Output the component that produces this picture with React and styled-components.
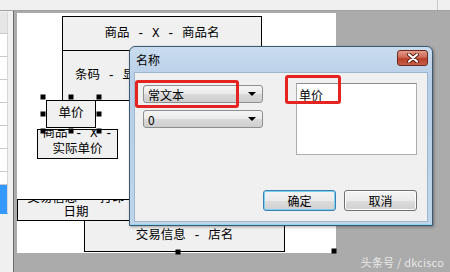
import React from "react"
import styled, { createGlobalStyle } from "styled-components"

const GlobalStyle = createGlobalStyle`
  html, body {
    margin: 0;
    padding: 0;
    background: #ababab;
  }
  body {
    font-family: "Noto Sans CJK SC", "Noto Sans", sans-serif;
  }
`

const Screen = styled.div`
  position: relative;
  width: 450px;
  height: 272px;
  display: flex;
  flex-direction: column;
  overflow: hidden;
  background: #f0f0f0;
`

const TopBar = styled.div`
  height: 10px;
  flex-shrink: 0;
  display: flex;
  justify-content: flex-end;
  background: #f0f0f0;
  border-bottom: 1px solid #a0a0a0;
`

const TopDivider = styled.div`
  width: 1px;
  height: 10px;
  margin-right: 12px;
  background: #c8c8c8;
`

const Main = styled.div`
  flex: 1;
  display: flex;
  min-height: 0;
`

const SideList = styled.div`
  width: 13px;
  flex-shrink: 0;
  display: flex;
  flex-direction: column;
  padding-top: 1px;
  background: #f0f0f0;
  border-right: 1px solid #6e6e6e;
`

const SideItem = styled.div`
  width: 7px;
  height: ${(p) => p.$h || 22}px;
  flex-shrink: 0;
  background: ${(p) => (p.$active ? "#3399ff" : p.$head ? "#e6e6e6" : "#ffffff")};
  border-bottom: 1px solid ${(p) => (p.$active ? "#3399ff" : "#c9c9c9")};
  border-right: 1px solid #d8d8d8;
`

const Workspace = styled.div`
  flex: 1;
  background: #ababab;
  padding: 2px 0 0 3px;
`

const Page = styled.div`
  position: relative;
  width: 319px;
  height: 240px;
  background: #ffffff;
`

const Field = styled.div`
  position: absolute;
  box-sizing: border-box;
  display: flex;
  flex-direction: column;
  align-items: center;
  justify-content: ${(p) => (p.$bottom ? "flex-end" : "center")};
  overflow: hidden;
  background: #f0f0f0;
  border: 1px solid #000;
  color: #000;
  font-family: "Liberation Mono", "Noto Sans CJK SC", monospace;
  font-size: 12.5px;
  line-height: ${(p) => p.$lh || 16}px;
  white-space: pre;
`

const Selection = styled.div`
  position: absolute;
`

const Handle = styled.div`
  position: absolute;
  width: 5px;
  height: 5px;
  background: #000;
  transform: translate(-50%, -50%);
`

const Dialog = styled.div`
  position: absolute;
  left: 129px;
  top: 46px;
  width: 304px;
  height: 180px;
  box-sizing: border-box;
  display: flex;
  flex-direction: column;
  padding: 0 4px 3px;
  border: 1px solid #3d5873;
  border-radius: 6px 6px 0 0;
  background: linear-gradient(#c9dcef, #b7cee6 20%, #bfd5ea);
  box-shadow: inset 0 -1px 0 #8fd6ee, 1px 1px 3px rgba(0, 0, 0, 0.35);
`

const TitleBar = styled.div`
  height: 25px;
  flex-shrink: 0;
  display: flex;
  align-items: center;
  justify-content: space-between;
  font-size: 12px;
  color: #000;
  padding-left: 2px;
`

const CloseButton = styled.div`
  width: 31px;
  height: 16px;
  box-sizing: border-box;
  margin-top: -4px;
  display: flex;
  align-items: center;
  justify-content: center;
  border: 1px solid #6b2a22;
  border-radius: 3px;
  background: linear-gradient(#e39a88, #cf6a55 45%, #b8402a 55%, #c8604a);
`

const DialogBody = styled.div`
  flex: 1;
  position: relative;
  display: flex;
  flex-direction: column;
  background: #f0f0f0;
  border: 1px solid #9fb6cf;
  padding: 10px 10px 10px 8px;
`

const Controls = styled.div`
  display: flex;
  gap: 33px;
`

const ComboColumn = styled.div`
  display: flex;
  flex-direction: column;
  gap: 7px;
  margin-top: 2px;
`

const Combo = styled.div`
  width: 120px;
  height: 18px;
  box-sizing: border-box;
  display: flex;
  align-items: center;
  justify-content: space-between;
  padding: 0 6px 0 4px;
  border: 1px solid #8e8f8f;
  border-radius: 3px;
  background: linear-gradient(#f5f5f5, #eaeaea 50%, #dadada 51%, #cfcfcf);
  font-size: 12px;
  color: #000;
`

const Arrow = styled.div`
  width: 0;
  height: 0;
  border-left: 4px solid transparent;
  border-right: 4px solid transparent;
  border-top: 4px solid #000;
`

const TextBox = styled.div`
  width: 122px;
  height: 72px;
  box-sizing: border-box;
  padding: 2px 2px;
  background: #fff;
  border: 1px solid #abadb3;
  border-top-color: #8a8c92;
  font-size: 12px;
  color: #000;
`

const ButtonRow = styled.div`
  margin-top: auto;
  display: flex;
  justify-content: flex-end;
  gap: 8px;
`

const Button = styled.div`
  width: 73px;
  height: 21px;
  box-sizing: border-box;
  display: flex;
  align-items: center;
  justify-content: center;
  border: 1px solid ${(p) => (p.$primary ? "#3c7fb1" : "#707070")};
  border-radius: 3px;
  background: linear-gradient(#f4f4f4, #ebebeb 50%, #dddddd 51%, #cfcfcf);
  box-shadow: ${(p) => (p.$primary ? "inset 0 0 0 1px #7ad0f0" : "inset 0 0 0 1px #fcfcfc")};
  font-size: 12px;
  color: #000;
`

const Mark = styled.div`
  position: absolute;
  box-sizing: border-box;
  border: 3px solid #e52421;
  border-radius: 3px;
`

const Watermark = styled.div`
  position: absolute;
  right: 6px;
  bottom: 2px;
  font-size: 11px;
  color: rgba(255, 255, 255, 0.75);
  letter-spacing: 0.2px;
`

const handles = [
  [-3, -3],
  [25, -3],
  [53, -3],
  [-3, 14],
  [53, 14],
  [-3, 31],
  [25, 31],
  [53, 31],
]

const App = () => (
  <Screen>
    <GlobalStyle />
    <TopBar>
      <TopDivider />
    </TopBar>
    <Main>
      <SideList>
        <SideItem $head $h={21} />
        <SideItem />
        <SideItem />
        <SideItem />
        <SideItem />
        <SideItem />
        <SideItem />
        <SideItem $h={12} />
        <SideItem $active $h={28} />
      </SideList>
      <Workspace>
        <Page>
          <Field style={{ left: 45, top: 3, width: 200, height: 35 }}>
            {"商品 - X - 商品名"}
          </Field>
          <Field style={{ left: 45, top: 37, width: 200, height: 51, alignItems: "flex-start", paddingLeft: 12 }}>
            {"条码 - 显示条码"}
          </Field>
          <Field $bottom style={{ left: 20, top: 116, width: 81, height: 30 }}>
            <span>{"商品 - X -"}</span>
            <span>实际单价</span>
          </Field>
          <Selection style={{ left: 29, top: 87, width: 50, height: 28 }}>
            <Field style={{ left: 0, top: 0, width: "100%", height: "100%" }}>单价</Field>
            {handles.map(([x, y]) => (
              <Handle key={`${x}-${y}`} style={{ left: x, top: y }} />
            ))}
          </Selection>
          <Field $bottom $lh={14} style={{ left: 0, top: 186, width: 118, height: 22 }}>
            <span>{"交易信息 - 打印"}</span>
            <span>日期</span>
          </Field>
          <Field style={{ left: 67, top: 207, width: 201, height: 32 }}>
            {"交易信息 - 店名"}
          </Field>
          <Handle style={{ left: 161, top: 239 }} />
          <Handle style={{ left: 317, top: 238 }} />
        </Page>
      </Workspace>
    </Main>

    <Dialog>
      <TitleBar>
        <span>名称</span>
        <CloseButton>
          <svg width="14" height="10" viewBox="0 0 14 10">
            <path d="M3 1.5 L11 8.5 M11 1.5 L3 8.5" stroke="#5a1c12" strokeWidth="4" strokeLinecap="round" />
            <path d="M3 1.5 L11 8.5 M11 1.5 L3 8.5" stroke="#ffffff" strokeWidth="2.2" strokeLinecap="round" />
          </svg>
        </CloseButton>
      </TitleBar>
      <DialogBody>
        <Controls>
          <ComboColumn>
            <Combo>
              <span>常文本</span>
              <Arrow />
            </Combo>
            <Combo>
              <span>0</span>
              <Arrow />
            </Combo>
          </ComboColumn>
          <TextBox>单价</TextBox>
        </Controls>
        <ButtonRow>
          <Button $primary>确定</Button>
          <Button>取消</Button>
        </ButtonRow>
        <Mark style={{ left: 0, top: 7, width: 104, height: 28 }} />
        <Mark style={{ left: 150, top: 2, width: 56, height: 29 }} />
      </DialogBody>
    </Dialog>

    <Watermark>头条号 / dkcisco</Watermark>
  </Screen>
)

export default App
